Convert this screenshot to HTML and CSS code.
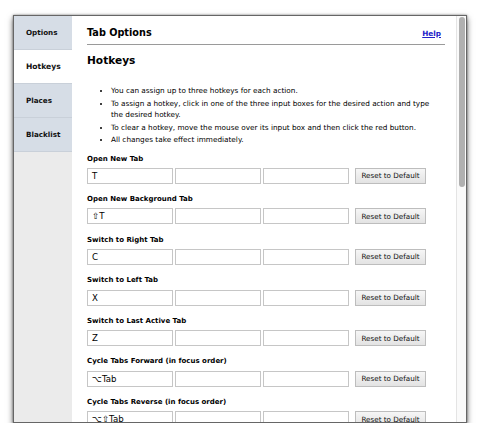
FILE: index.html
```html
<!DOCTYPE html>
<html>
<head>
<meta charset="utf-8">
<link rel="stylesheet" href="styles.css">
</head>
<body>
<div class="window">
  <nav class="sidebar">
    <div class="tab">Options</div>
    <div class="tab active">Hotkeys</div>
    <div class="tab">Places</div>
    <div class="tab">Blacklist</div>
  </nav>
  <main class="main">
    <div class="header">
      <span class="title">Tab Options</span>
      <a class="help" href="#">Help</a>
    </div>
    <h2 class="page-title">Hotkeys</h2>
    <ul class="notes">
      <li>You can assign up to three hotkeys for each action.</li>
      <li>To assign a hotkey, click in one of the three input boxes for the desired action and type the desired hotkey.</li>
      <li>To clear a hotkey, move the mouse over its input box and then click the red button.</li>
      <li>All changes take effect immediately.</li>
    </ul>
    <div class="section">
      <div class="label">Open New Tab</div>
      <div class="row"><div class="key">T</div><div class="key"></div><div class="key"></div><button class="reset">Reset to Default</button></div>
    </div>
    <div class="section">
      <div class="label">Open New Background Tab</div>
      <div class="row"><div class="key">⇧T</div><div class="key"></div><div class="key"></div><button class="reset">Reset to Default</button></div>
    </div>
    <div class="section">
      <div class="label">Switch to Right Tab</div>
      <div class="row"><div class="key">C</div><div class="key"></div><div class="key"></div><button class="reset">Reset to Default</button></div>
    </div>
    <div class="section">
      <div class="label">Switch to Left Tab</div>
      <div class="row"><div class="key">X</div><div class="key"></div><div class="key"></div><button class="reset">Reset to Default</button></div>
    </div>
    <div class="section">
      <div class="label">Switch to Last Active Tab</div>
      <div class="row"><div class="key">Z</div><div class="key"></div><div class="key"></div><button class="reset">Reset to Default</button></div>
    </div>
    <div class="section">
      <div class="label">Cycle Tabs Forward (in focus order)</div>
      <div class="row"><div class="key">⌥Tab</div><div class="key"></div><div class="key"></div><button class="reset">Reset to Default</button></div>
    </div>
    <div class="section">
      <div class="label">Cycle Tabs Reverse (in focus order)</div>
      <div class="row"><div class="key">⌥⇧Tab</div><div class="key"></div><div class="key"></div><button class="reset">Reset to Default</button></div>
    </div>
  </main>
  <div class="scrollbar"><div class="thumb"></div></div>
</div>
</body>
</html>
```

FILE: styles.css
```css
html, body {
  margin: 0;
  padding: 0;
  background: #ffffff;
}
body {
  padding: 15px 0 0 13px;
  font-family: "DejaVu Sans", sans-serif;
  color: #000;
}
.window {
  width: 452px;
  height: 406px;
  border: 1px solid #666;
  display: flex;
  overflow: hidden;
  background: #ffffff;
  box-shadow: 0 3px 6px rgba(0,0,0,0.6), 0 0 2px rgba(0,0,0,0.4);
}
.sidebar {
  width: 58px;
  flex: none;
  background: #ebebeb;
  display: flex;
  flex-direction: column;
}
.tab {
  height: 33px;
  border-bottom: 1px solid #c9d0d9;
  background: #d6dde6;
  display: flex;
  align-items: center;
  padding-left: 12px;
  font-weight: bold;
  font-size: 7.2px;
  color: #111;
}
.tab.active {
  background: #ffffff;
  font-size: 7.6px;
}
.main {
  flex: 1;
  padding: 0 11px 0 15px;
  min-width: 0;
}
.header {
  display: flex;
  justify-content: space-between;
  align-items: baseline;
  margin-top: 11px;
  padding-bottom: 5px;
  border-bottom: 1px solid #9a9a9a;
}
.title {
  font-weight: bold;
  font-size: 9.7px;
  line-height: 12px;
}
.help {
  font-weight: bold;
  font-size: 7.3px;
  color: #2020c8;
  text-decoration: underline;
  margin-right: 4px;
}
.page-title {
  margin: 9px 0 0 0;
  font-size: 10.6px;
  line-height: 13px;
  font-weight: bold;
}
.notes {
  margin: 18px 14px 8px 0;
  padding-left: 24px;
  font-size: 7.3px;
  line-height: 11.5px;
}
.notes li {
  margin-bottom: 1px;
}
.section {
  margin-bottom: 10.3px;
}
.label {
  font-weight: bold;
  font-size: 7px;
  line-height: 10px;
  margin-bottom: 4.3px;
}
.row {
  display: flex;
  height: 16px;
}
.key {
  width: 86px;
  height: 16px;
  box-sizing: border-box;
  border: 1px solid #c6c6c6;
  background: #fff;
  margin-right: 2px;
  padding-left: 4px;
  font-size: 8.6px;
  line-height: 14px;
  color: #000;
}
.reset {
  margin: 0 0 0 4px;
  width: 71px;
  height: 16px;
  box-sizing: border-box;
  border: 1px solid #bdbdbd;
  background: linear-gradient(#f6f6f6, #e3e3e3);
  font-family: "DejaVu Sans", sans-serif;
  font-size: 7.2px;
  color: #111;
  padding: 0;
}
.scrollbar {
  width: 10px;
  flex: none;
  border-left: 1px solid #e4e4e4;
  box-sizing: border-box;
  background: #fafafa;
  padding: 1px 1px 0 2px;
}
.thumb {
  height: 170px;
  background: #b0b0b0;
  border-radius: 3px;
}
```
